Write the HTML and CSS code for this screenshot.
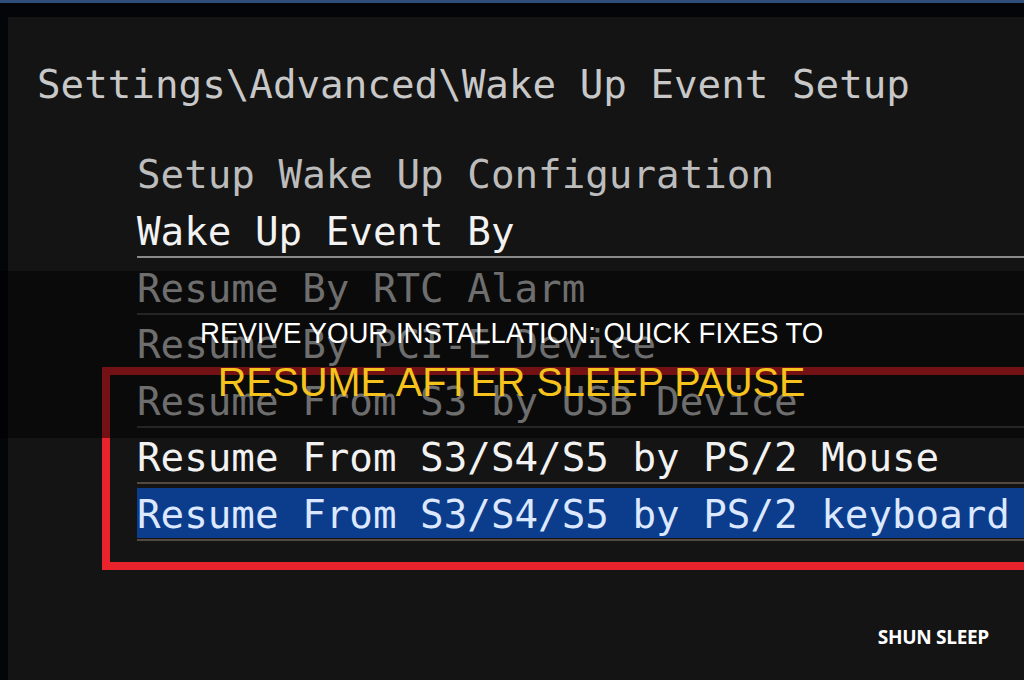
FILE: index.html
```html
<!DOCTYPE html>
<html>
<head>
<meta charset="utf-8">
<link rel="stylesheet" href="styles.css">
</head>
<body>
<div class="screen">
  <div class="topbar"></div>
  <div class="panel">
    <div class="path">Settings\Advanced\Wake Up Event Setup</div>
    <div class="menu">
      <div class="section">Setup Wake Up Configuration</div>
      <div class="row lit sep-light"><span class="label">Wake Up Event By</span></div>
      <div class="row dim sep-dark"><span class="label">Resume By RTC Alarm</span></div>
      <div class="row dim sep-none"><span class="label">Resume By PCI-E Device</span></div>
      <div class="row dim sep-dark"><span class="label">Resume From S3 by USB Device</span></div>
      <div class="row lit sep-brown"><span class="label">Resume From S3/S4/S5 by PS/2 Mouse</span></div>
      <div class="row selected sep-brown"><span class="label">Resume From S3/S4/S5 by PS/2 keyboard</span></div>
    </div>
  </div>
  <div class="frame"></div>
  <div class="band">
    <div class="title-top">REVIVE YOUR INSTALLATION: QUICK FIXES TO</div>
    <div class="title-main">RESUME AFTER SLEEP PAUSE</div>
  </div>
  <div class="brand">SHUN SLEEP</div>
</div>
</body>
</html>
```

FILE: styles.css
```css
html, body {
  margin: 0;
  padding: 0;
  background: #050608;
}

.screen {
  position: relative;
  width: 1024px;
  height: 680px;
  overflow: hidden;
  background: #040508;
}

.topbar {
  height: 3px;
  background: #2e4d78;
}

.panel {
  margin: 14px 0 0 8px;
  height: 663px;
  box-sizing: border-box;
  padding: 43px 0 0 29px;
  background: #141414;
  font-family: "DejaVu Sans Mono", "Liberation Mono", monospace;
  font-size: 39.2px;
  white-space: nowrap;
}

.path {
  line-height: 50px;
  color: #c8c8c8;
}

.menu {
  margin: 40px 0 0 100px;
}

.section {
  line-height: 50px;
  color: #bcbcbc;
  margin-bottom: 5px;
}

.row {
  padding-bottom: 1px;
  border-bottom: 2px solid transparent;
  margin-bottom: 3.6px;
}

.label {
  display: block;
  height: 50px;
  box-sizing: border-box;
  padding-top: 4px;
  line-height: 46px;
}

.lit .label { color: #f2f2f2; }
.dim .label { color: #dcdcdc; }

.selected .label {
  background: #0c3d8c;
  color: #dce8ff;
}

.sep-light { border-bottom-color: #8a8a8a; }
.sep-dark { border-bottom-color: #4a4a4a; }
.sep-brown { border-bottom-color: #54493f; }

.frame {
  position: absolute;
  left: 102px;
  top: 367px;
  width: 960px;
  height: 187px;
  border: 8px solid #e8232b;
}

.band {
  position: absolute;
  left: 0;
  top: 271px;
  width: 1024px;
  height: 167px;
  background: rgba(0, 0, 0, 0.5);
  display: flex;
  flex-direction: column;
  align-items: center;
  padding-top: 47px;
  box-sizing: border-box;
  font-family: "Liberation Sans", Arial, sans-serif;
  line-height: 1;
  white-space: nowrap;
}

.title-top {
  color: #ffffff;
  font-size: 30px;
  transform: scaleX(0.92);
}

.title-main {
  color: #f6c21c;
  font-size: 41px;
  margin-top: 14px;
  transform: scaleX(0.965);
}

.brand {
  position: absolute;
  right: 35px;
  top: 624px;
  font-family: "Open Sans", "Liberation Sans", sans-serif;
  font-weight: 700;
  font-size: 19px;
  color: #ffffff;
  letter-spacing: -0.3px;
}
```
